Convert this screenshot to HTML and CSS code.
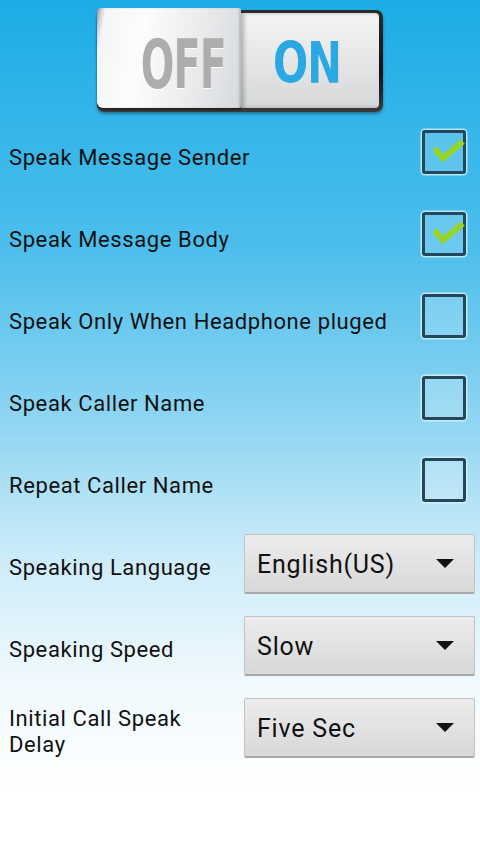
FILE: index.html
```html
<!DOCTYPE html>
<html lang="en">
<head>
    <meta charset="UTF-8">
    <meta name="viewport" content="width=device-width, initial-scale=1.0">
    <title>Speak Settings</title>
    <link rel="stylesheet" href="styles.css">
</head>
<body>
    <div class="power-wrapper">
        <div class="power-switch">
            <div class="power-key"><span class="power-label power-off">OFF</span></div>
            <div class="power-slot"><span class="power-label power-on">ON</span></div>
        </div>
    </div>

    <div class="settings">
        <div class="setting-row">
            <div class="setting-label">Speak Message Sender</div>
            <div class="check-box checked"></div>
        </div>
        <div class="setting-row">
            <div class="setting-label">Speak Message Body</div>
            <div class="check-box checked"></div>
        </div>
        <div class="setting-row">
            <div class="setting-label">Speak Only When Headphone pluged</div>
            <div class="check-box"></div>
        </div>
        <div class="setting-row">
            <div class="setting-label">Speak Caller Name</div>
            <div class="check-box"></div>
        </div>
        <div class="setting-row">
            <div class="setting-label">Repeat Caller Name</div>
            <div class="check-box"></div>
        </div>
        <div class="setting-row">
            <div class="setting-label">Speaking Language</div>
            <div class="spinner"><span>English(US)</span><i class="spinner-arrow"></i></div>
        </div>
        <div class="setting-row">
            <div class="setting-label">Speaking Speed</div>
            <div class="spinner"><span>Slow</span><i class="spinner-arrow"></i></div>
        </div>
        <div class="setting-row">
            <div class="setting-label narrow">Initial Call Speak Delay</div>
            <div class="spinner"><span>Five Sec</span><i class="spinner-arrow"></i></div>
        </div>
    </div>
</body>
</html>
```

FILE: styles.css
```css
* {
    box-sizing: border-box;
    margin: 0;
    padding: 0;
}

html, body {
    width: 100%;
    height: 100%;
}

body {
    font-family: Roboto, 'Noto Sans', sans-serif;
    color: #111;
    background: linear-gradient(#1cade6 0, #4dbeec 250px, #8fd5f2 420px, #cdecf9 560px, #f0f9fd 680px, #fff 790px);
}

/* big OFF/ON switch at the top */
.power-wrapper {
    height: 111px;
    display: flex;
    justify-content: center;
    align-items: flex-start;
    padding-top: 10px;
}

.power-switch {
    width: 286px;
    height: 102px;
    display: flex;
    padding: 3px 4px 4px 0;
    border-radius: 7px;
    background: linear-gradient(#2c2c2c, #111 60%, #3a3a3a);
    box-shadow: 0 2px 3px rgba(0, 0, 0, 0.35);
}

.power-key {
    width: 144px;
    margin-top: -5px;
    padding-left: 28px;
    display: flex;
    align-items: center;
    justify-content: center;
    background: linear-gradient(100deg, #8d9296 0, #d5d8db 5px, #f4f5f6 9px, #fdfdfd 30%, #d7dadd 100%);
    border-radius: 4px 2px 2px 6px;
    box-shadow: inset -2px 0 2px rgba(0, 0, 0, 0.15), 0 2px 2px rgba(0, 0, 0, 0.4);
}

.power-slot {
    flex: 1;
    display: flex;
    align-items: center;
    justify-content: center;
    background: linear-gradient(#f4f4f4, #e4e5e6 55%, #d6d7d8);
    box-shadow: inset 3px 0 4px rgba(0, 0, 0, 0.25);
    border-radius: 0 4px 4px 0;
}

.power-label {
    display: inline-block;
    font-family: 'Liberation Sans Narrow', 'DejaVu Sans Condensed', sans-serif;
    font-weight: bold;
    font-size: 50px;
    line-height: 1;
    letter-spacing: -1px;
}

.power-off {
    color: #adadad;
    margin-top: 14px;
    transform: scale(0.88, 1.34);
    text-shadow: 0 1px 0 #fff;
}

.power-on {
    color: #2ba8e3;
    margin: 6px 6px 0 0;
    transform: scale(0.92, 1.14);
}

/* preference rows */
.setting-row {
    height: 82px;
    display: flex;
    align-items: center;
    padding-left: 9px;
}

.setting-label {
    flex: 1;
    font-size: 22px;
    letter-spacing: 0.6px;
    line-height: 26px;
    padding-top: 12px;
}

.setting-label.narrow {
    padding-right: 30px;
}

.check-box {
    width: 44px;
    height: 44px;
    margin-right: 14px;
    border: 3px solid #24485a;
    border-radius: 3px;
    background: rgba(255, 255, 255, 0.18);
    box-shadow: 0 0 0 1.5px rgba(220, 245, 255, 0.75);
    position: relative;
}

/* green tick */
.check-box.checked::after {
    content: '';
    position: absolute;
    left: 9px;
    top: 6px;
    width: 23px;
    height: 10px;
    border-left: 6px solid #97d428;
    border-bottom: 6px solid #97d428;
    border-radius: 0 0 0 2px;
    transform: rotate(-40deg);
    filter: drop-shadow(0 0 0.7px #3d6d10);
}

.spinner {
    width: 231px;
    height: 60px;
    margin: 3px 5px 0 0;
    display: flex;
    align-items: center;
    justify-content: space-between;
    padding: 0 20px 0 12px;
    font-size: 25px;
    letter-spacing: 0.8px;
    background: linear-gradient(#ececec, #d8d8d8);
    border: 1px solid #c2c2c2;
    border-bottom: 2px solid #a8a8a8;
    border-radius: 2px;
}

.spinner span {
    padding-top: 2px;
}

.spinner-arrow {
    width: 0;
    height: 0;
    border-left: 9px solid transparent;
    border-right: 9px solid transparent;
    border-top: 9px solid #111;
}
```
